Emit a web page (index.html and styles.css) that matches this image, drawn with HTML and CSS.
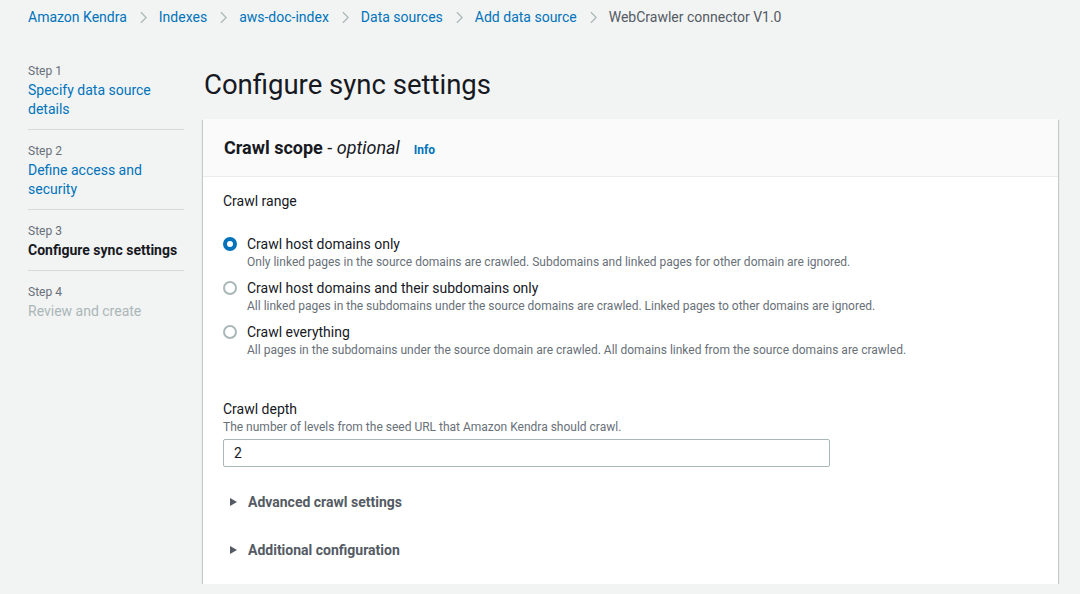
FILE: index.html
```html
<!DOCTYPE html>
<html lang="en">
  <head>
    <meta charset="UTF-8" />
    <meta name="viewport" content="width=device-width, initial-scale=1.0" />
    <title>Configure sync settings</title>
    <link rel="stylesheet" href="styles.css">
  </head>

  <body>
    <nav class="breadcrumbs">
      <a class="crumb">Amazon Kendra</a>
      <svg class="chevron" viewBox="0 0 8 14"><path d="M1 1l6 6-6 6" /></svg>
      <a class="crumb">Indexes</a>
      <svg class="chevron" viewBox="0 0 8 14"><path d="M1 1l6 6-6 6" /></svg>
      <a class="crumb">aws-doc-index</a>
      <svg class="chevron" viewBox="0 0 8 14"><path d="M1 1l6 6-6 6" /></svg>
      <a class="crumb">Data sources</a>
      <svg class="chevron" viewBox="0 0 8 14"><path d="M1 1l6 6-6 6" /></svg>
      <a class="crumb">Add data source</a>
      <svg class="chevron" viewBox="0 0 8 14"><path d="M1 1l6 6-6 6" /></svg>
      <span class="crumb current">WebCrawler connector V1.0</span>
    </nav>

    <div class="layout">
      <ul class="steps">
        <li class="step">
          <div class="step-label">Step 1</div>
          <a class="step-title">Specify data source details</a>
        </li>
        <li class="step">
          <div class="step-label">Step 2</div>
          <a class="step-title">Define access and security</a>
        </li>
        <li class="step active">
          <div class="step-label">Step 3</div>
          <span class="step-title">Configure sync settings</span>
        </li>
        <li class="step disabled">
          <div class="step-label">Step 4</div>
          <span class="step-title">Review and create</span>
        </li>
      </ul>

      <main class="main">
        <h1 class="page-title">Configure sync settings</h1>

        <section class="card">
          <div class="card-header">
            <h2>Crawl scope <span class="optional">- <i>optional</i></span></h2>
            <a class="info">Info</a>
          </div>
          <div class="card-body">
            <div class="field-label">Crawl range</div>
            <div class="radio-group">
              <label class="radio">
                <span class="radio-dot checked"></span>
                <span class="radio-text">
                  <span class="radio-label">Crawl host domains only</span>
                  <span class="radio-desc">Only linked pages in the source domains are crawled. Subdomains and linked pages for other domain are ignored.</span>
                </span>
              </label>
              <label class="radio">
                <span class="radio-dot"></span>
                <span class="radio-text">
                  <span class="radio-label">Crawl host domains and their subdomains only</span>
                  <span class="radio-desc">All linked pages in the subdomains under the source domains are crawled. Linked pages to other domains are ignored.</span>
                </span>
              </label>
              <label class="radio">
                <span class="radio-dot"></span>
                <span class="radio-text">
                  <span class="radio-label">Crawl everything</span>
                  <span class="radio-desc">All pages in the subdomains under the source domain are crawled. All domains linked from the source domains are crawled.</span>
                </span>
              </label>
            </div>

            <div class="field depth">
              <div class="field-label">Crawl depth</div>
              <div class="field-desc">The number of levels from the seed URL that Amazon Kendra should crawl.</div>
              <input class="input" type="text" value="2" />
            </div>

            <div class="expanders">
              <div class="expander"><span class="caret"></span>Advanced crawl settings</div>
              <div class="expander"><span class="caret"></span>Additional configuration</div>
            </div>
          </div>
        </section>
      </main>
    </div>
  </body>
</html>
```

FILE: styles.css
```css
body {
  margin: 0;
  background-color: #f2f3f3;
  font-family: Roboto, "Liberation Sans", sans-serif;
  font-size: 14px;
  color: #16191f;
}
a {
  color: #0073bb;
  text-decoration: none;
}

.breadcrumbs {
  display: flex;
  align-items: center;
  height: 34px;
  padding: 0 28px;
}
.crumb {
  line-height: 20px;
}
.crumb.current {
  color: #545b64;
}
.chevron {
  width: 7px;
  height: 13px;
  margin: 0 12px 0 13px;
  fill: none;
  stroke: #aab7b8;
  stroke-width: 1.4;
}

.layout {
  display: flex;
  align-items: flex-start;
}
.steps {
  list-style: none;
  margin: 0 0 0 28px;
  padding: 29px 0 0;
  width: 156px;
  flex-shrink: 0;
}
.step {
  padding: 13px 0 10px;
  border-bottom: 1px solid #d5dbdb;
}
.step:first-child {
  padding-top: 0;
}
.step:last-child {
  border-bottom: none;
}
.step-label {
  font-size: 12px;
  line-height: 16px;
  color: #687078;
  margin-bottom: 2px;
}
.step-title {
  display: block;
  line-height: 19px;
}
.step.active .step-title {
  font-weight: bold;
}
.step.disabled .step-title {
  color: #aab7b8;
}

.main {
  flex: 1;
  margin: 0 22px 0 19px;
}
.page-title {
  margin: 33px 0 16px 1px;
  font-size: 27.5px;
  line-height: 36px;
  font-weight: normal;
}

.card {
  background-color: white;
  box-shadow: 0 1px 1px 0 rgba(0, 28, 36, 0.3), 1px 1px 1px 0 rgba(0, 28, 36, 0.15), -1px 1px 1px 0 rgba(0, 28, 36, 0.15);
}
.card-header {
  display: flex;
  align-items: baseline;
  background-color: #fafafa;
  border-bottom: 1px solid #eaeded;
  padding: 18px 20px 17px 21px;
}
.card-header h2 {
  margin: 0;
  font-size: 18px;
  line-height: 22px;
  font-weight: bold;
}
.optional {
  font-weight: normal;
  color: #16191f;
}
.info {
  margin-left: 14px;
  font-size: 12px;
  font-weight: bold;
}
.card-body {
  padding: 14px 20px 10px;
}

.field-label {
  line-height: 20px;
}
.field-desc {
  font-size: 12px;
  line-height: 16px;
  color: #687078;
}

.radio-group {
  display: flex;
  flex-direction: column;
  gap: 8px;
  margin-top: 23px;
}
.radio {
  display: flex;
  align-items: flex-start;
}
.radio-dot {
  width: 14px;
  height: 14px;
  box-sizing: border-box;
  border: 2px solid #aab7b8;
  border-radius: 50%;
  margin-top: 3px;
  flex-shrink: 0;
}
.radio-dot.checked {
  border: 4px solid #0073bb;
}
.radio-text {
  display: flex;
  flex-direction: column;
  margin-left: 10px;
}
.radio-label {
  line-height: 20px;
}
.radio-desc {
  font-size: 12px;
  line-height: 16px;
  color: #687078;
}

.depth {
  margin-top: 41px;
}
.input {
  display: block;
  width: 607px;
  height: 28px;
  box-sizing: border-box;
  margin-top: 4px;
  padding: 0 10px;
  border: 1px solid #aab7b8;
  border-radius: 2px;
  font-family: inherit;
  font-size: 14px;
  color: #16191f;
}

.expanders {
  margin-top: 11px;
}
.expander {
  display: flex;
  align-items: center;
  padding: 14px 0;
  line-height: 20px;
  font-weight: bold;
  color: #545b64;
}
.caret {
  width: 0;
  height: 0;
  border-top: 4.5px solid transparent;
  border-bottom: 4.5px solid transparent;
  border-left: 7px solid #545b64;
  margin: 0 11px 0 7px;
}
```
